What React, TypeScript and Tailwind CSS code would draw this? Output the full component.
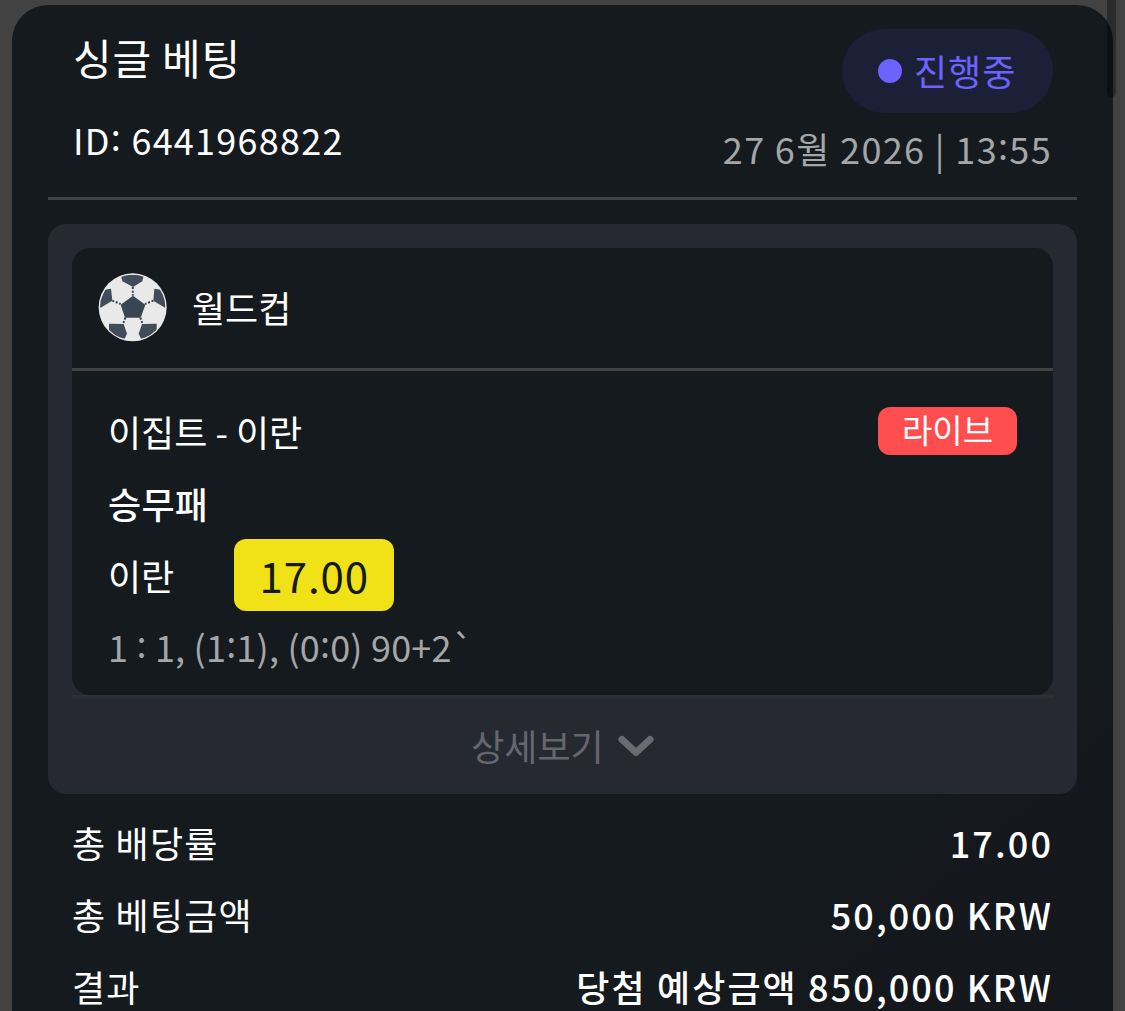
import type { ReactNode } from "react";

interface SummaryItem {
  label: string;
  value: string;
}

const summary: SummaryItem[] = [
  { label: "총 배당률", value: "17.00" },
  { label: "총 베팅금액", value: "50,000 KRW" },
  { label: "결과", value: "당첨 예상금액 850,000 KRW" },
];

function SoccerBall() {
  return (
    <svg className="h-[69px] w-[69px] shrink-0" viewBox="144 97 207 207">
      <defs>
        <clipPath id="ball">
          <circle cx="248" cy="200" r="98" />
        </clipPath>
      </defs>
      <circle cx="248" cy="200" r="102" fill="#e9e9ea" />
      <g clipPath="url(#ball)" fill="#414c58">
        <path d="M213 106 Q248 98 281 106 L277 122 L249 139 L217 122Z" />
        <path d="M165 147 L183 144 L187 180 L152 201 L146 190Z" />
        <path d="M332 147 L313 144 L310 180 L345 201 L352 190Z" />
        <path d="M177 249 L221 250 L231 279 L223 296 L200 291 L177 270Z" />
        <path d="M320 249 L276 250 L266 279 L274 296 L297 291 L320 270Z" />
      </g>
      <path d="M249 165 L286 192 L272 231 L225 231 L212 192Z" fill="#384552" />
      <g stroke="#384552" strokeWidth="6" strokeDasharray="6 5" fill="none">
        <path d="M248.500 139V165M187 180L212 190M310 180L285 190M226 231L219 251M271 231L278 251" />
      </g>
    </svg>
  );
}

function Chevron() {
  return (
    <svg className="h-[22px] w-[36px]" viewBox="0 0 36 22" fill="none">
      <path d="M4 4.500L18 17.500L32 4.500" stroke="#696b70" strokeWidth="7" strokeLinecap="round" strokeLinejoin="round" />
    </svg>
  );
}

// colon lifted to the middle of the digits
function Colon() {
  return <span className="align-[4px] leading-none">:</span>;
}

function StatusBadge({ children }: { children: ReactNode }) {
  return (
    <div className="flex h-[84px] w-[211px] items-center rounded-full bg-[#1c2036] pl-9 text-[#6c63ff]">
      <span className="h-6 w-6 rounded-full bg-[#6c63ff]" />
      <span className="mb-[2px] ml-3 text-[36px] leading-[54px] tracking-[1px]">{children}</span>
    </div>
  );
}

function App() {
  return (
    <div className="relative h-[1011px] overflow-hidden bg-[#424242] pt-[5px] pr-3 pl-3 font-['Noto_Sans_CJK_KR',sans-serif] text-[36px] leading-[54px] text-white">
      <div className="h-[1006px] rounded-t-[36px] bg-linear-to-br from-[#151a1e] from-80% to-[#14171c] to-90% px-9">
        <header className="flex h-[195px] justify-between border-b-[3px] border-[#424242] px-6 pt-6">
          <div className="-mt-[2px] pl-px">
            <h1 className="text-[42px] leading-[60px] tracking-[0.8px]">싱글 베팅</h1>
            <p className="mt-[25px] tracking-[1.25px]">
              ID<Colon /> 6441968822
            </p>
          </div>
          <div className="flex flex-col items-end">
            <StatusBadge>진행중</StatusBadge>
            <p className="mt-[8px] pr-px tracking-[1.35px] text-[#a5a6a8]">
              27 6월 2026 | 13<Colon />55
            </p>
          </div>
        </header>

        <section className="mt-6 h-[570px] rounded-[18px] bg-[#262932] px-6 pt-6">
          <div className="h-[447px] rounded-[18px] bg-[#151a1e]">
            <div className="flex h-[123px] items-center border-b-[3px] border-[#424242] pb-[2px] pl-[26px]">
              <SoccerBall />
              <span className="ml-[25px]">월드컵</span>
            </div>
            <div className="px-9 pt-9">
              <div className="flex h-12 items-center justify-between">
                <span>이집트 - 이란</span>
                <span className="flex h-12 w-[139px] items-center justify-center rounded-[12px] bg-[#ff4e50] pb-1 text-[33px]">라이브</span>
              </div>
              <p className="mt-[21px] tracking-[0.3px] font-medium">승무패</p>
              <div className="mt-[9px] flex h-[72px] items-center">
                <span>이란</span>
                <span className="ml-[60px] flex h-[72px] w-[160px] items-center justify-center rounded-[12px] bg-[#f0e216] text-[42px] tracking-[0.9px] text-[#151a05]">17.00</span>
              </div>
              <p className="mt-[8px] tracking-[0.2px] text-[#a5a6a8]">
                1 <Colon /> 1, (1<Colon />1), (0<Colon />0) 90+2`
              </p>
            </div>
          </div>
          <button className="flex h-[99px] w-full items-center justify-center gap-[14px] border-t-[3px] border-[#2e3038] text-[#65676d]">
            <span className="mb-[2px]">상세보기</span>
            <Chevron />
          </button>
        </section>

        <dl className="mt-[21px] flex flex-col gap-[18px] px-6">
          {summary.map((item) => (
            <div key={item.label} className="flex justify-between">
              <dt className="tracking-[1.2px]">{item.label}</dt>
              <dd className="font-medium tracking-[2.1px]">{item.value}</dd>
            </div>
          ))}
        </dl>
      </div>

      {/* scrollbar thumb */}
      <div className="absolute top-0 right-[9px] h-[97px] w-[9px] rounded-b-full bg-black/35" />
    </div>
  );
}

export default App;
